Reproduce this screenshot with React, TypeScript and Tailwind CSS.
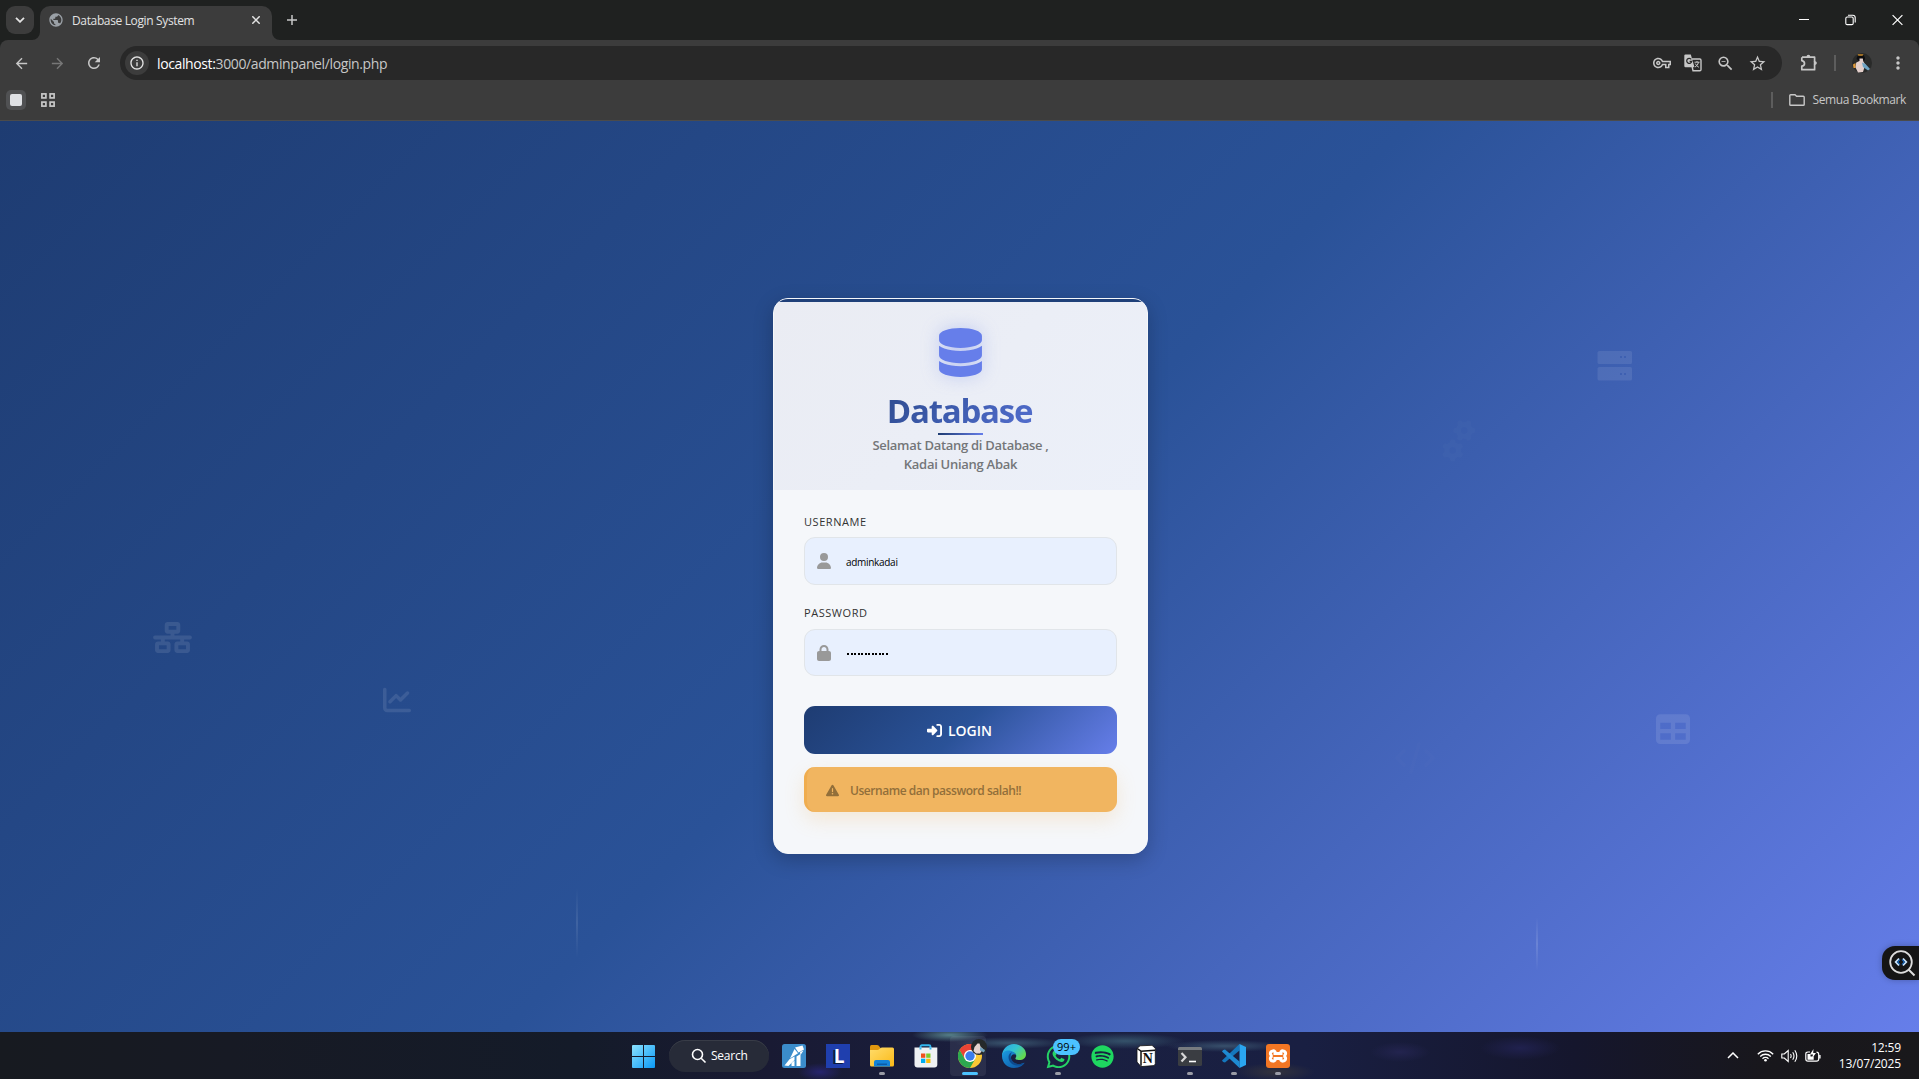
import React from "react";
import {
  FaDatabase,
  FaUser,
  FaLock,
  FaRightToBracket,
  FaTriangleExclamation,
  FaNetworkWired,
  FaChartLine,
  FaTable,
  FaGears,
  FaCode,
} from "react-icons/fa6";
import { FaWhatsapp, FaSpotify } from "react-icons/fa";
import {
  MdArrowBack,
  MdArrowForward,
  MdRefresh,
  MdStarOutline,
  MdMoreVert,
  MdOutlineVpnKey,
  MdZoomOut,
  MdPublic,
  MdInfoOutline,
} from "react-icons/md";

function TabStrip() {
  return (
    <div className="flex h-10 items-start bg-[#1f2120]">
      <div className="ml-1.5 mt-1.5 flex size-7 items-center justify-center rounded-[9px] bg-[#3c3c3c]">
        <svg width="10" height="6" viewBox="0 0 10 6" fill="none" stroke="#e3e3e3" strokeWidth="1.8">
          <path d="M1 .8 5 4.8 9 .8" />
        </svg>
      </div>
      <div className="relative ml-1.5 mt-1.5 flex h-[34px] w-[232px] items-center rounded-t-[10px] bg-[#3c3c3c] pb-1.5">
        <svg className="absolute -left-2 bottom-0" width="8" height="8" viewBox="0 0 8 8">
          <path d="M8 0v8H0a8 8 0 0 0 8-8Z" fill="#3c3c3c" />
        </svg>
        <svg className="absolute -right-2 bottom-0" width="8" height="8" viewBox="0 0 8 8">
          <path d="M0 0v8h8a8 8 0 0 1-8-8Z" fill="#3c3c3c" />
        </svg>
        <MdPublic className="ml-2 size-4 text-[#9aa0a6]" />
        <span className="ml-2 mt-px whitespace-nowrap text-[12px] tracking-[-0.36px] text-[#e3e3e3]">Database Login System</span>
        <svg className="ml-auto mr-3" width="8" height="8" viewBox="0 0 8 8" stroke="#e3e3e3" strokeWidth="1.5">
          <path d="M.3.3l7.4 7.4M7.7.3.3 7.7" />
        </svg>
      </div>
      <svg className="ml-[15px] mt-[15px]" width="10" height="10" viewBox="0 0 10 10" stroke="#c7c7c7" strokeWidth="1.5">
        <path d="M5 0v10M0 5h10" />
      </svg>
      <div className="ml-auto mr-4 mt-[14px] flex items-center gap-9 text-white">
        <svg width="10" height="12" viewBox="0 0 10 12" stroke="currentColor">
          <path d="M0 5.5h10" />
        </svg>
        <svg width="11" height="12" viewBox="0 0 11 12" fill="none" stroke="currentColor" strokeWidth="1.1">
          <rect x=".8" y="3" width="7.4" height="7.6" rx="1.4" />
          <path d="M3 1.2h4.8a2.4 2.4 0 0 1 2.4 2.4v4.8" />
        </svg>
        <svg width="11" height="12" viewBox="0 0 11 12" stroke="currentColor" strokeWidth="1.2">
          <path d="M.6 1.1l9.8 9.8M10.4 1.1.6 10.9" />
        </svg>
      </div>
    </div>
  );
}

function TranslateIcon() {
  return (
    <svg className="ml-[13px]" width="18" height="18" viewBox="0 0 18 18">
      <path d="M6.500 5h9.300q1.200 0 1.200 1.200v9.300q0 1.200-1.200 1.200H9Z" fill="none" stroke="#c7c7c7" strokeWidth="1.400" />
      <path d="M1.500.5h5.300l3.700 12.700H1.500Q.3 13.200.3 12V1.700Q.3.500 1.500.5Z" fill="#c7c7c7" />
      <path d="M7.300 5.400A2.500 2.500 0 1 0 7.700 7.300H5.600" fill="none" stroke="#282828" strokeWidth="1.300" />
      <path d="M10.500 8.200h5M13 7v1.200M14.600 8.400q-.8 3-3.600 4.700M11.300 9.600q1 2.300 3.600 3.700" fill="none" stroke="#c7c7c7" strokeWidth="1" />
    </svg>
  );
}

function Toolbar() {
  return (
    <div className="flex h-[46px] items-center rounded-tl-[8px] rounded-tr-[8px] bg-[#3c3c3c] text-[#c7c7c7]">
      <MdArrowBack className="ml-[13px] size-[17px]" />
      <MdArrowForward className="ml-[19px] size-[17px] text-[#777]" />
      <MdRefresh className="ml-[19px] size-[18px]" />
      <div className="ml-[17px] flex h-[34px] w-[1662px] items-center rounded-full bg-[#282828] pr-[15px]">
        <div className="ml-[5px] flex size-6 items-center justify-center rounded-full bg-[#3c3c3c]">
          <MdInfoOutline className="size-4 text-[#e3e3e3]" />
        </div>
        <span className="ml-2 whitespace-nowrap text-[14px] tracking-[-0.38px] text-[#c7c7c7]">
          <span className="text-white">localhost:</span>3000/adminpanel/login.php
        </span>
        <MdOutlineVpnKey className="ml-auto size-[18px]" />
        <TranslateIcon />
        <MdZoomOut className="ml-[14px] size-[19px]" />
        <MdStarOutline className="ml-[13px] size-[19px]" />
      </div>
      <svg className="ml-[18px]" width="18" height="18" viewBox="0 0 18 18" fill="none" stroke="#c7c7c7" strokeWidth="1.700">
        <path d="M2 3.200h12.600v4.300M14.600 10.700v5H1.800v-3.500q2.700-.3 2.700-2.700T1.800 6.700V3.200" strokeLinejoin="round" />
        <path d="M14.600 7v4" />
        <path d="M6.500 3q0-2.200 1.900-2.200T10.300 3ZM14.800 7.300q2.100 0 2.100 1.800t-2.100 1.800Z" fill="#c7c7c7" stroke="none" />
      </svg>
      <div className="ml-[16px] h-4 w-[2px] bg-[#5d5d5d]" />
      <svg className="ml-4" width="20" height="20" viewBox="0 0 20 20">
        <circle cx="10" cy="10" r="10" fill="#292a29" />
        <path d="M4.500 6Q5 1.500 9 1.500t4 4.500l-1 2H7Z" fill="#0e0e10" />
        <path d="M5.500 1.300h6l-1 1.500h-4Z" fill="#c98b2b" />
        <path d="M7.500 5.500h3.300l.5 3 2 3-2.300 7.500-5 .5L3.300 14l1-4.500 3.200-1.500Z" fill="#e3cfcb" />
        <path d="m10 9.500 3.500 1.500 4.500 5-2 1.500-5-3.500Z" fill="#6fa4c4" />
        <path d="M1 11.500 3.500 10v5L1.500 15Z" fill="#e09a39" />
      </svg>
      <MdMoreVert className="ml-4 size-[20px]" />
    </div>
  );
}

function BookmarkBar() {
  return (
    <div className="flex h-[35px] items-center border-b border-[#4b4b4b] bg-[#3c3c3c] pb-[6px]">
      <div className="ml-1.5 flex size-5 items-center justify-center rounded-[5px] bg-[#505153]">
        <div className="size-3 rounded-[2px] bg-[#dfe1e5]" />
      </div>
      <svg className="ml-[15px]" width="14" height="14" viewBox="0 0 14 14" fill="none" stroke="#c7c7c7" strokeWidth="1.7">
        <rect x=".9" y=".9" width="4" height="4" />
        <rect x="9.1" y=".9" width="4" height="4" />
        <rect x=".9" y="9.1" width="4" height="4" />
        <rect x="9.1" y="9.1" width="4" height="4" />
      </svg>
      <div className="ml-auto h-4 w-[2px] bg-[#5d5d5d]" />
      <svg className="ml-4" width="16" height="12" viewBox="0 0 16 12" fill="none" stroke="#c7c7c7" strokeWidth="1.4">
        <path d="M.8 1.6Q.8.7 1.7.7H6l1.6 1.6h6.7q.9 0 .9.9v7.2q0 .9-.9.9H1.7q-.9 0-.9-.9Z" />
      </svg>
      <span className="ml-2 mr-[13px] whitespace-nowrap text-[12px] tracking-[-0.4px] text-[#c7c7c7]">Semua Bookmark</span>
    </div>
  );
}

function FieldLabel({ children }: { children: React.ReactNode }) {
  return (
    <div className="h-[14px] whitespace-nowrap text-[11px] font-medium leading-[14px] tracking-[0.55px] text-[#333]">{children}</div>
  );
}

function LoginCard() {
  return (
    <div className="flex h-[556px] w-[375px] flex-col overflow-hidden rounded-[15px] border border-[#f5f7fa] bg-[#f5f7fa] shadow-[0_6px_20px_rgba(0,0,0,0.22)]">
      <div className="h-[3px] shrink-0 bg-[#1f4079]" />
      <div className="flex h-[188px] shrink-0 flex-col items-center bg-linear-135 from-[#eaecf3] to-[#ecf0f9]">
        <FaDatabase className="mt-[26px] h-[49px] w-[43px] text-[#667eea] drop-shadow-[0_0_9px_rgba(102,126,234,0.32)]" />
        <h1 className="mr-[2px] mt-[14px] w-[311px] bg-linear-135 from-[#1e3c72] via-[#3f5db1] to-[#667eea] bg-clip-text text-center text-[33px] font-bold leading-[40px] tracking-[-1.25px] text-transparent">
          Database
        </h1>
        <div className="mt-[2px] h-[2px] w-[45px] bg-linear-to-r from-[#1e3c72] to-[#667eea]" />
        <p className="mt-[1px] whitespace-nowrap text-center text-[13px] font-semibold leading-[19px] tracking-[-0.28px] text-[#747679]">
          Selamat Datang di Database ,
          <br />
          Kadai Uniang Abak
        </p>
      </div>
      <div className="flex flex-col px-[30px] pt-[25px]">
        <FieldLabel>USERNAME</FieldLabel>
        <div className="mt-2 flex h-12 items-center rounded-[11px] border border-[#e1e5e9] bg-[#e8f0fe] pl-3">
          <FaUser className="h-4 w-[14px] text-[#999]" />
          <span className="ml-[15px] mt-[3px] text-[10px] tracking-[-0.3px] text-black">adminkadai</span>
        </div>
        <div className="mt-[21px]">
          <FieldLabel>PASSWORD</FieldLabel>
        </div>
        <div className="mt-[9px] flex h-[47px] items-center rounded-[11px] border border-[#e1e5e9] bg-[#e8f0fe] pl-3">
          <FaLock className="h-4 w-[14px] text-[#999]" />
          <span className="ml-[15px] flex gap-[1.5px] pl-px pt-[2px]">
            {Array.from({ length: 12 }, (_, i) => (
              <span key={i} className="size-[2px] bg-black" />
            ))}
          </span>
        </div>
        <button className="mt-[30px] flex h-12 items-center justify-center rounded-[11px] bg-linear-135 from-[#1e3c72] via-[#2a5298] to-[#667eea] text-[14px] font-semibold text-white">
          <FaRightToBracket className="size-[15px]" />
          <span className="ml-[6px] mr-[2px]">LOGIN</span>
        </button>
        <div className="mt-[13px] flex h-[45px] items-center rounded-[11px] border-l-[3px] border-[#f0ad4e] bg-[#f1b560] pl-[19px] text-[#926f3a] shadow-[0_8px_20px_rgba(240,173,78,0.2)]">
          <FaTriangleExclamation className="mt-px size-[13px]" />
          <span className="ml-[11px] mt-[2px] text-[12px] font-semibold tracking-[-0.46px]">Username dan password salah!!</span>
        </div>
      </div>
    </div>
  );
}

function LoginPage() {
  return (
    <main className="relative flex h-[911px] items-start justify-center overflow-hidden bg-linear-135 from-[#1e3c72] via-[#2a5298] to-[#667eea] pl-[2px] pt-[177px]">
      <FaNetworkWired className="absolute left-[153px] top-[501px] h-[31px] w-[39px] text-white/10" />
      <FaChartLine className="absolute left-[383px] top-[565px] size-[28px] text-white/10" />
      <svg className="absolute left-[1597px] top-[230px] text-white/9" width="36" height="30" viewBox="0 0 36 30" fill="currentColor" fillRule="evenodd">
        <path d="M2.500 0h31Q35 0 35 1.500v10q0 1.500-1.500 1.500h-31Q.5 13 .5 11.500v-10Q.5 0 2.500 0ZM23 5v2h2V5ZM27 5v2h2V5Z" />
        <path d="M2.500 16h31q1.500 0 1.500 1.500v10.500q0 1.500-1.500 1.500h-31Q.5 29.500.5 28V17.500Q.5 16 2.500 16ZM23 22v2h2v-2ZM27 22v2h2v-2Z" />
      </svg>
      <FaTable className="absolute left-[1656px] top-[591px] size-[34px] text-white/10" />
      <FaGears className="absolute left-[1438px] top-[303px] h-[34px] w-[42px] rotate-90 text-white/2" />
      <FaCode className="absolute left-[1395px] top-[620px] h-[34px] w-[40px] text-white/1" />
      <div className="absolute left-[576px] top-[767px] h-[70px] w-[2px] bg-linear-to-b from-transparent via-white/10 to-transparent" />
      <div className="absolute left-[1536px] top-[796px] h-[54px] w-[2px] bg-linear-to-b from-transparent via-white/14 to-transparent" />
      <LoginCard />
      <div className="absolute right-0 top-[825px] flex h-[34px] w-[37px] items-center rounded-l-[13px] bg-[#151515] pl-[7px] shadow-[0_0_6px_rgba(0,0,0,0.25)]">
        <svg className="shrink-0" width="27" height="27" viewBox="0 0 27 27" fill="none">
          <circle cx="12" cy="12" r="10.8" stroke="#ddd" strokeWidth="1.8" />
          <path d="m19.5 19.5 6 6" stroke="#ddd" strokeWidth="2" />
          <path d="M10 8.500 6.700 12l3.300 3.500M14 8.500l3.300 3.500-3.300 3.500" stroke="#c9e2f8" strokeWidth="1.800" />
          <path d="M11 9.500 8.700 12l2.300 2.500M13 9.500l2.300 2.500-2.300 2.500" stroke="#1673d4" strokeWidth="1.100" />
        </svg>
      </div>
    </main>
  );
}

function WindowsLogo() {
  return (
    <svg width="23" height="23" viewBox="0 0 23 23">
      <defs>
        <linearGradient id="win" gradientUnits="userSpaceOnUse" x1="0" y1="0" x2="23" y2="23">
          <stop stopColor="#8be2ff" />
          <stop offset="1" stopColor="#0a98f5" />
        </linearGradient>
      </defs>
      <path d="M1 0h10v11H0V1q0-1 1-1ZM12 0h10q1 0 1 1v10H12ZM0 12h11v11H1q-1 0-1-1ZM12 12h11v10q0 1-1 1H12Z" fill="url(#win)" />
    </svg>
  );
}

function StudioIcon() {
  return (
    <svg width="24" height="24" viewBox="0 0 24 24">
      <rect width="24" height="24" rx="2.5" fill="#3b8ccb" />
      <path d="M13 3.500 20.500 1.500 22 5.500 16.500 8.500Z" fill="#fff" />
      <path d="M12.500 5 16 9.200 8 14.500Z" fill="#fff" />
      <path d="M2.500 21.500 7.500 15.300 12.500 12.500v3.500L6.500 22Z" fill="#fff" />
      <path d="m9.500 19 3-2.500V22h-3Z" fill="#fff" />
      <path d="m14.500 12.500 4-2.500v12h-4Z" fill="#fff" />
      <path d="m18 8 3.500-1.500L18.500 11Z" fill="#fff" />
    </svg>
  );
}

function LetterIcon() {
  return (
    <div className="flex size-6 items-center justify-center bg-[#1f3fae] pl-[2px] text-[19px] font-bold leading-none text-white [text-shadow:-1px_1px_0_#0a1a3c,-2px_1px_0_#0a1a3c]">
      L
    </div>
  );
}

function FolderIcon() {
  return (
    <svg width="24" height="22" viewBox="0 0 24 22">
      <defs>
        <linearGradient id="fold" x1="0" y1="0" x2="1" y2="1">
          <stop stopColor="#ffdc6b" />
          <stop offset="1" stopColor="#fbb917" />
        </linearGradient>
      </defs>
      <path d="M0 1.500Q0 0 1.500 0H7q1 0 1.800.8L10.500 3V8H0Z" fill="#e0970f" />
      <path d="M0 5h7.500q1 0 1.700-.8L10.500 3Q11 2.500 12 2.500H22.500Q24 2.500 24 4v16q0 1.500-1.500 1.500h-21Q0 21.500 0 20Z" fill="url(#fold)" />
      <path d="M4 21.500V17q0-2 2-2h12q2 0 2 2v4.500Z" fill="#1483d8" />
      <path d="M7 18.500h10v1.500H7Z" fill="#0b5da8" />
    </svg>
  );
}

function StoreIcon() {
  return (
    <svg width="24" height="24" viewBox="0 0 24 24">
      <path d="M6.500 5.500V2.700Q6.500 1.200 8 1.200h7q1.500 0 1.500 1.500v2.800" fill="none" stroke="#32b5ee" strokeWidth="1.900" />
      <path d="M.5 3.500h22.800v17q0 3-3 3H3.500q-3 0-3-3Z" fill="#eff1f3" />
      <path d="M6.500 3.500v2M16.500 3.500v2" stroke="#32b5ee" strokeWidth="1.900" />
      <path d="M7 9.500h4.300v4.300H7Z" fill="#f1511b" />
      <path d="M12.200 9.500h4.300v4.300h-4.300Z" fill="#80cc28" />
      <path d="M7 14.700h4.300V19H7Z" fill="#00adef" />
      <path d="M12.200 14.700h4.300V19h-4.300Z" fill="#fbbc09" />
    </svg>
  );
}

function ChromeIcon() {
  return (
    <svg width="24" height="24" viewBox="0 0 24 24">
      <circle cx="12" cy="12" r="12" fill="#fcc934" />
      <path d="M12 6h10.400A12 12 0 0 0 1.600 6l5.200 9Z" fill="#ea4335" />
      <path d="M1.600 6A12 12 0 0 0 12 24l5.200-9-5.200 3-5.200-3Z" fill="#2da94f" />
      <circle cx="12" cy="12" r="6" fill="#fff" />
      <circle cx="12" cy="12" r="4.700" fill="#3b7ded" />
    </svg>
  );
}

function EdgeIcon() {
  return (
    <svg width="24" height="24" viewBox="0 0 24 24">
      <defs>
        <linearGradient id="edgeA" x1="0" y1="0" x2="1" y2=".6">
          <stop stopColor="#2aa7e8" />
          <stop offset=".55" stopColor="#34c4cf" />
          <stop offset="1" stopColor="#63d94f" />
        </linearGradient>
        <linearGradient id="edgeB" x1="0" y1="0" x2="1" y2="1">
          <stop stopColor="#1b9de2" />
          <stop offset="1" stopColor="#0d4f9e" />
        </linearGradient>
      </defs>
      <path d="M0 12C0 5 5.500 0 12 0s12 4.500 12 10c0 4-3 6-6.500 6-3 0-4.500-1-4-2 1.500-1.500 1-5-3-6C6 7 1.500 8.500 0 12Z" fill="url(#edgeA)" />
      <path d="M0 12c0-4 4-6 7.500-5.500C11 7 13.500 9 14 11c-2-1.500-5-.5-5 3 0 4.500 5 7 9.500 6 2-.4 3.500-1.500 4-1C20.500 22 17 24 12 24 5 24 0 18.500 0 12Z" fill="url(#edgeB)" />
      <path d="M6.500 13c0-2.500 1.800-4.300 4-5-1.500 1.200-2 3-1.800 5 .5 5 6 8.500 12.800 6.500C18 23.500 6.500 22 6.500 13Z" fill="#0c4a8f" />
    </svg>
  );
}

function NotionIcon() {
  return (
    <svg width="20" height="22" viewBox="0 0 20 22">
      <path d="M1 3.500 4 .8 16 .3l3.300 3v15.500l-1 1.800L5 21.600 1 17Z" fill="#fff" stroke="#111" strokeWidth=".8" />
      <path d="M1.200 3.500 5 6.200v14.500M5 6.200l14-.9" fill="none" stroke="#111" strokeWidth="1.500" />
      <text x="11.900" y="18" textAnchor="middle" fontSize="14" fontWeight="700" fontFamily="Liberation Serif, serif" fill="#111">N</text>
    </svg>
  );
}

function TerminalIcon() {
  return (
    <svg width="24" height="19" viewBox="0 0 24 19">
      <rect width="24" height="19" rx="1.500" fill="#3a3d42" />
      <path d="M0 3V1.500Q0 0 1.500 0h21Q24 0 24 1.500V3Z" fill="#777b80" />
      <path d="m3.500 6 4 4.200-4 4.300" fill="none" stroke="#d7d7d7" strokeWidth="2.200" />
      <path d="M11 14.500h7" stroke="#fff" strokeWidth="1.600" />
    </svg>
  );
}

function VsCodeIcon() {
  return (
    <svg width="24" height="24" viewBox="0 0 24 24">
      <path d="M17.500 0v6.500L3 18.500 1.200 18 0 16.500Z" fill="#1577bd" />
      <path d="M17.500 24v-6.500L3 5.500l-1.800.5L0 7.500Z" fill="#1e8ad2" />
      <path d="M17.500 0 24 3v18l-6.500 3Z" fill="#2aa5f0" />
    </svg>
  );
}

function TaskItem({ children, dot }: { children: React.ReactNode; dot?: boolean }) {
  return (
    <div className="relative flex h-full w-11 items-center justify-center pt-px">
      {children}
      {dot ? <div className="absolute bottom-[4px] left-[19px] h-[3px] w-[6px] rounded-full bg-[#9a9ca6]" /> : null}
    </div>
  );
}

function Taskbar() {
  return (
    <div className="flex h-[47px] items-center bg-[radial-gradient(ellipse_38px_7px_at_950px_3px,#557f88_0%,transparent_100%),radial-gradient(ellipse_55px_6px_at_1010px_11px,#3a566f_0%,transparent_100%),radial-gradient(ellipse_60px_8px_at_1125px_9px,#35526a_0%,transparent_100%),radial-gradient(ellipse_60px_6px_at_1225px_14px,#38506c_0%,transparent_100%),radial-gradient(ellipse_22px_9px_at_820px_40px,#26246e_0%,transparent_100%),radial-gradient(ellipse_40px_9px_at_1275px_40px,#33333c_0%,transparent_100%),radial-gradient(ellipse_30px_10px_at_1400px_20px,#23244f_0%,transparent_100%),radial-gradient(ellipse_40px_12px_at_1520px_16px,#20214e_0%,transparent_100%),linear-gradient(90deg,#171a20_0%,#171a24_12%,#141b29_30%,#191a33_40%,#1a2041_55%,#191f42_68%,#15162d_82%,#18171c_92%,#19181b_100%)]">
      <div className="ml-[621px] flex w-11 justify-center pt-px">
        <WindowsLogo />
      </div>
      <div className="ml-1 mr-[3px] flex h-8 w-[100px] items-center rounded-full bg-[#272b38] pl-[22px] shadow-[inset_0_1px_0_#383c47]">
        <svg width="16" height="16" viewBox="0 0 16 16" fill="none" stroke="#fff" strokeWidth="1.600">
          <circle cx="6.500" cy="6.500" r="5" />
          <path d="m10.200 10.200 4.300 4.300" />
        </svg>
        <span className="ml-1 mt-px text-[12px] tracking-[-0.25px] text-white">Search</span>
      </div>
      <TaskItem><StudioIcon /></TaskItem>
      <TaskItem><LetterIcon /></TaskItem>
      <TaskItem dot><FolderIcon /></TaskItem>
      <TaskItem><StoreIcon /></TaskItem>
      <div className="relative flex h-full w-11 items-center justify-center pt-px">
        <div className="absolute left-[2px] top-[4px] h-[40px] w-[36px] rounded-[4px] bg-white/7" />
        <div className="relative"><ChromeIcon /></div>
        <svg className="absolute left-[23px] top-[7px]" width="16" height="16" viewBox="0 0 16 16">
          <circle cx="8" cy="8" r="8" fill="#25292a" />
          <path d="M6.500 4.500h2l1 3 2.500 2.500-3 4.500H5L2.500 12l1-4Z" fill="#e5d3cd" />
          <path d="m9 8 5 3-1 2.500-4-2Z" fill="#72a3c0" />
        </svg>
        <div className="absolute bottom-[4px] left-[14px] h-[3px] w-4 rounded-full bg-[#4cc2ff]" />
      </div>
      <TaskItem><EdgeIcon /></TaskItem>
      <TaskItem dot>
        <FaWhatsapp className="size-[27px] text-[#25d366]" />
        <div className="absolute left-[17px] top-[7px] flex h-4 w-[27px] items-center justify-center rounded-full bg-[#4cc2ff] text-[11px] text-black">99+</div>
      </TaskItem>
      <TaskItem><FaSpotify className="size-[23px] text-[#1ed760]" /></TaskItem>
      <TaskItem><NotionIcon /></TaskItem>
      <TaskItem dot><TerminalIcon /></TaskItem>
      <TaskItem dot><VsCodeIcon /></TaskItem>
      <TaskItem dot>
        <div className="flex size-6 items-center justify-center rounded-[3px] bg-[#f37623]">
          <svg width="20" height="18" viewBox="0 0 20 18" fill="none" stroke="#fff" strokeWidth="3">
            <path d="M10 6.500H13V4.800a2.600 2.600 0 1 1 2.600 4.200 2.600 2.600 0 1 1-2.600 4.200v-1.700H7v1.700A2.600 2.600 0 1 1 4.400 9 2.600 2.600 0 1 1 7 4.800v1.700Z" />
          </svg>
        </div>
      </TaskItem>
      <svg className="ml-auto" width="12" height="7" viewBox="0 0 12 7" fill="none" stroke="#fff" strokeWidth="1.500">
        <path d="m1 6 5-5 5 5" />
      </svg>
      <svg className="ml-[18px]" width="17" height="13" viewBox="0 0 17 13" fill="none" stroke="#fff" strokeWidth="1.300">
        <path d="M.8 5.200a10.800 10.800 0 0 1 15.400 0M3.200 7.500a7.400 7.400 0 0 1 10.600 0M5.500 9.700a4.200 4.200 0 0 1 6 0" />
        <circle cx="8.500" cy="11.300" r="1.300" fill="#fff" stroke="none" />
      </svg>
      <svg className="ml-[7px]" width="17" height="14" viewBox="0 0 17 14" fill="none" stroke="#fff" strokeWidth="1.100">
        <path d="M.8 5v4h2.500L7.200 12.500v-11L3.300 5Z" />
        <path d="M9.500 5q1.300 2 0 4M11.700 3.200q2.600 3.800 0 7.600M13.800 1.200q4 5.800 0 11.600" />
      </svg>
      <svg className="ml-[7px]" width="16" height="14" viewBox="0 0 16 14" fill="none" stroke="#fff" strokeWidth="1.200">
        <path d="M5 3H3Q.8 3 .8 5v5q0 2.200 2.200 2.200h8.500q2.200 0 2.200-2.200V5.500q0-2.300-2.200-2.300M15 6v3.500" />
        <path d="M2.500 5h3v2.500h3.200v3.200H2.500Z" fill="#fff" stroke="none" />
        <path d="M8.500 0 5 5.500h3L7 9.500 11 4H8.200Z" fill="#fff" stroke="none" />
      </svg>
      <div className="ml-[18px] mr-[18px] mt-px whitespace-nowrap text-right text-[12px] leading-4 tracking-[-0.15px] text-white">
        12:59
        <br />
        13/07/2025
      </div>
    </div>
  );
}

export default function App() {
  return (
    <div className="flex h-[1079px] w-[1919px] flex-col overflow-hidden bg-[#1f2120] font-['Open_Sans','Noto_Sans',sans-serif]">
      <TabStrip />
      <Toolbar />
      <BookmarkBar />
      <LoginPage />
      <Taskbar />
    </div>
  );
}
